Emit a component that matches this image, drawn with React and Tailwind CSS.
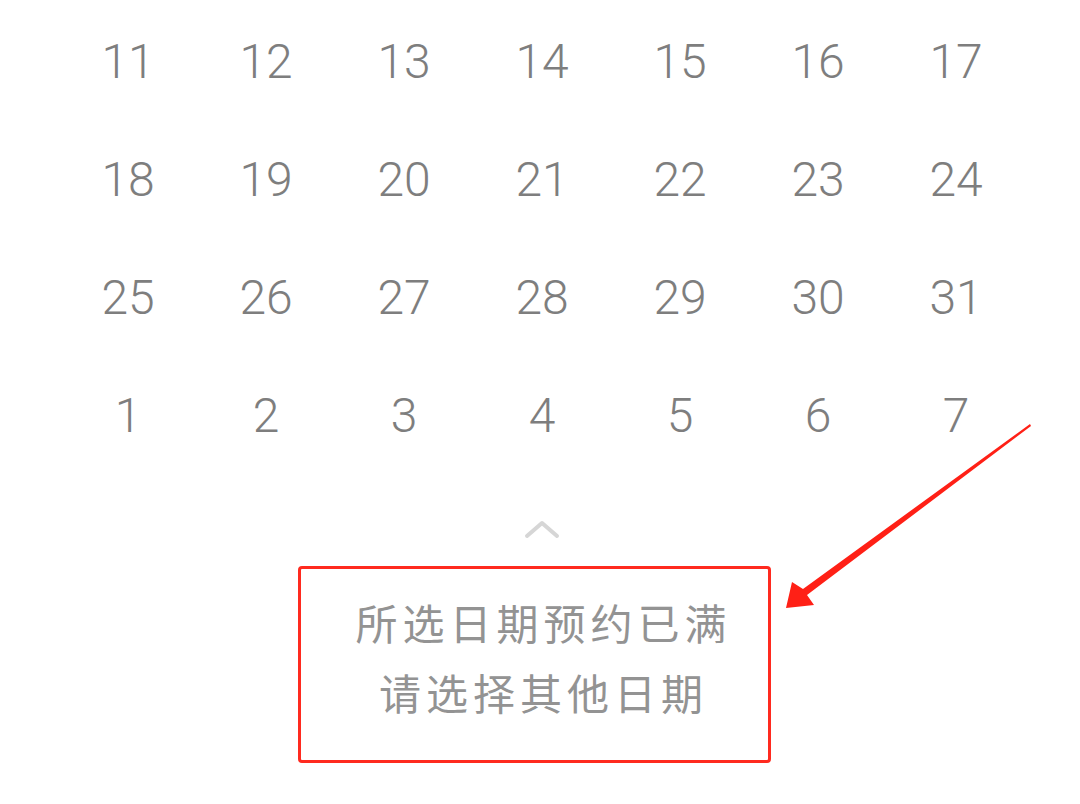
import React from 'react';

const rows = [
  [11, 12, 13, 14, 15, 16, 17],
  [18, 19, 20, 21, 22, 23, 24],
  [25, 26, 27, 28, 29, 30, 31],
  [1, 2, 3, 4, 5, 6, 7],
];

export default function App() {
  return (
    <div className="relative w-[1080px] h-[804px] bg-white overflow-hidden font-['Roboto','Liberation_Sans',sans-serif]">
      {/* calendar grid */}
      <div className="ml-[59px] w-[966px] pt-[3px]">
        {rows.map((r, i) => (
          <div key={i} className="grid grid-cols-7 h-[118px]">
            {r.map(d => (
              <div key={d} className="flex items-center justify-center text-[48px] font-light text-[#7e7e7e] leading-none">
                {d}
              </div>
            ))}
          </div>
        ))}
      </div>

      {/* collapse chevron */}
      <div className="flex justify-center mt-[44px]">
        <svg width="36" height="20" viewBox="0 0 36 20" className="ml-[4px]">
          <path d="M3 17 L18 4 L33 17" fill="none" stroke="#d6d6d6" strokeWidth="4" strokeLinecap="round" strokeLinejoin="round" />
        </svg>
      </div>

      {/* notice box */}
      <div className="ml-[298px] mt-[27px] w-[473px] h-[197px] border-[3px] border-[#ff2a1f] rounded-[4px] flex flex-col items-center justify-center pb-[16px]">
        <div className="text-[42px] tracking-[5px] leading-[70px] text-[#939393] font-['Noto_Sans_CJK_SC',sans-serif] text-center">
          <div className="pl-[18px]">所选日期预约已满</div>
          <div className="pl-[18px]">请选择其他日期</div>
        </div>
      </div>

      {/* annotation arrow */}
      <svg className="absolute inset-0 pointer-events-none" width="1080" height="804">
        <polygon
          points="1030,424 1031,426 807,595 814,605 786,608 792,582 803,589"
          fill="#ff2016"
        />
      </svg>
    </div>
  );
}
